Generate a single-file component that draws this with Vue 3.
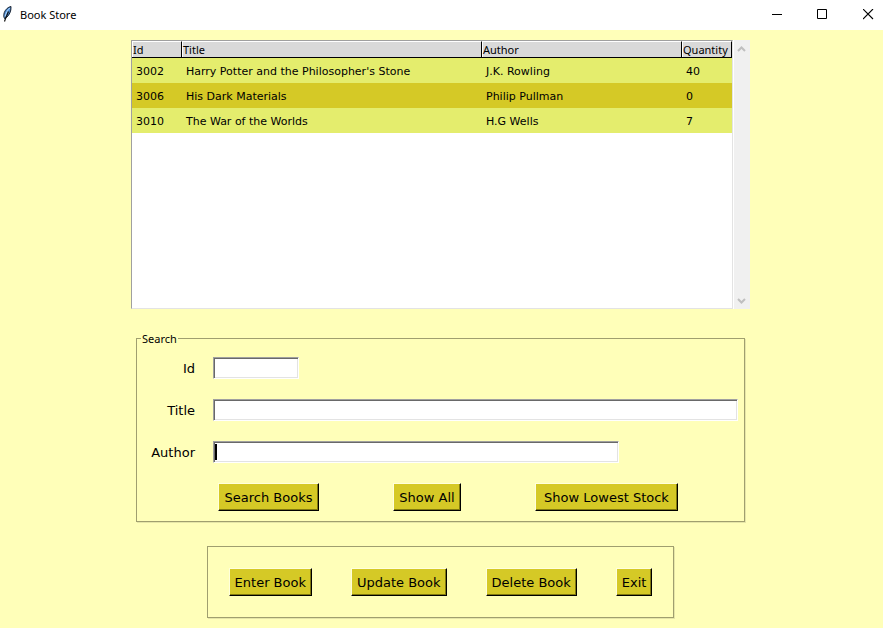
<script setup>
import { ref } from 'vue'

const books = ref([
  { id: '3002', title: "Harry Potter and the Philosopher's Stone", author: 'J.K. Rowling', quantity: 40 },
  { id: '3006', title: 'His Dark Materials', author: 'Philip Pullman', quantity: 0 },
  { id: '3010', title: 'The War of the Worlds', author: 'H.G Wells', quantity: 7 },
])

const id = ref('')
const title = ref('')
const author = ref('')
</script>

<template>
  <div class="window">
    <header class="titlebar">
      <svg class="feather" width="12" height="18" viewBox="0 0 12 18" aria-hidden="true">
        <path d="M10 1.500 C7 2 4.500 4.500 3.300 7.500 C2.500 10 2.700 12 3.500 13.500 C6.500 12.500 9 9 9.800 5 Z" fill="#4f8fd6" stroke="#17202e" stroke-width="1" />
        <path d="M8.800 3 C6.500 5 5 8 4 11.500" fill="none" stroke="#b5d8fa" stroke-width="1" />
        <path d="M7.500 6.500 C6 10 4.500 13 3.500 16.500" fill="none" stroke="#111" stroke-width="1.200" />
      </svg>
      <h1 class="caption">Book Store</h1>
      <div class="controls">
        <button type="button" aria-label="Minimize">
          <svg width="11" height="11" viewBox="0 0 11 11"><path d="M1 5.500H11" stroke="#000" /></svg>
        </button>
        <button type="button" aria-label="Maximize">
          <svg width="11" height="11" viewBox="0 0 11 11"><path d="M.5.5H9.500V9.500H.5Z" fill="none" stroke="#000" /></svg>
        </button>
        <button type="button" aria-label="Close">
          <svg width="11" height="11" viewBox="0 0 11 11"><path d="M0 0L10 10M10 0L0 10" stroke="#000" stroke-width="1.100" /></svg>
        </button>
      </div>
    </header>

    <main class="content">
      <section class="listing">
        <div class="pane">
          <table>
            <colgroup>
              <col class="narrow" />
              <col class="wide" />
              <col class="medium" />
              <col class="narrow" />
            </colgroup>
            <thead>
              <tr>
                <th scope="col">Id</th>
                <th scope="col">Title</th>
                <th scope="col">Author</th>
                <th scope="col">Quantity</th>
              </tr>
            </thead>
            <tbody>
              <tr v-for="book in books" :key="book.id">
                <td>{{ book.id }}</td>
                <td>{{ book.title }}</td>
                <td>{{ book.author }}</td>
                <td>{{ book.quantity }}</td>
              </tr>
            </tbody>
          </table>
        </div>
        <div class="scrollbar">
          <button type="button" aria-label="Scroll up">
            <svg width="9" height="6" viewBox="0 0 9 6"><path d="M1 5L4.500 1.500L8 5" fill="none" stroke="#bfbfbf" stroke-width="2" /></svg>
          </button>
          <button type="button" aria-label="Scroll down">
            <svg width="9" height="6" viewBox="0 0 9 6"><path d="M1 1L4.500 4.500L8 1" fill="none" stroke="#bfbfbf" stroke-width="2" /></svg>
          </button>
        </div>
      </section>

      <form class="search-form" @submit.prevent>
        <fieldset class="search">
          <legend>Search</legend>
          <div class="fields">
            <label for="book-id">Id</label>
            <input id="book-id" v-model="id" class="short" type="text" />
            <label for="book-title">Title</label>
            <input id="book-title" v-model="title" type="text" />
            <label for="book-author">Author</label>
            <input id="book-author" v-model="author" class="long active" type="text" />
          </div>
          <div class="search-actions">
            <button type="submit" class="action">Search Books</button>
            <button type="button" class="action">Show All</button>
            <button type="button" class="action">Show Lowest Stock</button>
          </div>
        </fieldset>
      </form>

      <section class="manage">
        <button type="button" class="action">Enter Book</button>
        <button type="button" class="action">Update Book</button>
        <button type="button" class="action">Delete Book</button>
        <button type="button" class="action">Exit</button>
      </section>
    </main>
  </div>
</template>

<style>
body {
  background: #ffffb9;
}
</style>

<style scoped>
.window {
  min-height: 100vh;
  box-sizing: border-box;
  display: flex;
  flex-direction: column;
  color: #000;
  font-family: "DejaVu Sans", Verdana, sans-serif;
  font-size: 13px;
}
.titlebar {
  display: flex;
  align-items: center;
  height: 30px;
  padding: 0 9px 0 1px;
  background: #fff;
}
.feather {
  margin-bottom: 2px;
}
.caption {
  margin: 0 0 0 7px;
  font: 400 11px/16px "Noto Sans", "Open Sans", sans-serif;
}
.controls {
  display: flex;
  gap: 35px;
  margin: 0 0 1px auto;
}
.controls button,
.scrollbar button {
  display: flex;
  padding: 0;
  border: 0;
  background: none;
}
.content {
  display: flex;
  flex-direction: column;
  align-items: center;
  padding: 10px 2px 10px 0;
}
.listing {
  display: flex;
  width: 619px;
  max-width: 100%;
  height: 269px;
  background: #fff;
}
.pane {
  flex: 1;
  box-sizing: border-box;
  margin-right: 1px;
  border: 1px solid #e3e3e3;
  border-top-color: #a0a0a0;
  border-left-color: #a0a0a0;
}
table {
  width: 100%;
  table-layout: fixed;
  border-collapse: separate;
  border-spacing: 0;
}
.narrow {
  width: 50px;
}
.medium {
  width: 200px;
}
th {
  box-sizing: border-box;
  height: 17px;
  padding: 0 0 0 1px;
  border: 1px solid #000;
  border-top-color: #fff;
  border-left: 0;
  background: #d9d9d9;
  box-shadow: inset 1px 0 0 #fff;
  font: 400 11px/15px "Noto Sans", "Open Sans", sans-serif;
  text-align: left;
  white-space: nowrap;
}
td {
  padding: 2px 4px 0;
  background: #e4ed6d;
  font-size: 11px;
  line-height: 23px;
  white-space: nowrap;
}
tbody tr:nth-child(even) td {
  background: #d5c926;
}
.scrollbar {
  display: flex;
  flex-direction: column;
  align-items: center;
  justify-content: space-between;
  width: 16px;
  box-sizing: border-box;
  padding: 6px 1px 5px 0;
  background: #f0f0f0;
}
.search-form {
  width: 609px;
  max-width: 100%;
  margin-top: 22px;
}
.search {
  margin: 0;
  min-width: 0;
  padding: 11px 6px 10px;
  border: 1px solid #a09f6f;
  box-shadow: 1px 1px 0 #e6e6a7;
}
legend {
  margin-left: -2px;
  padding: 0 1px;
  font: 400 11px/15px "Noto Sans", "Open Sans", sans-serif;
}
.fields {
  display: grid;
  grid-template-columns: 52px 1fr;
  gap: 20px 18px;
  align-items: center;
}
label {
  text-align: right;
}
input {
  width: 100%;
  height: 22px;
  box-sizing: border-box;
  padding: 0 2px;
  border: 1px solid #fff;
  border-top-color: #a0a0a0;
  border-left-color: #a0a0a0;
  border-radius: 0;
  outline: 0;
  background: #fff;
  box-shadow: inset 1px 1px 0 #696969, inset -1px -1px 0 #e3e3e3;
  font: inherit;
}
.short {
  width: 86px;
}
.long {
  width: 406px;
}
.active {
  background: #fff linear-gradient(#000, #000) 1px center / 2px 16px no-repeat;
}
.search-actions {
  display: grid;
  grid-template-columns: 101px 68px 143px;
  gap: 74px;
  margin: 20px 0 0 75px;
}
.action {
  height: 28px;
  box-sizing: border-box;
  padding: 0 5px;
  border: 1px solid #000;
  border-top-color: #ffffdc;
  border-left-color: #ffffdc;
  border-radius: 0;
  background: #d5c926;
  box-shadow: inset -1px -1px 0 #80790f;
  color: #000;
  font: inherit;
  white-space: nowrap;
}
.manage {
  display: flex;
  flex-wrap: wrap;
  gap: 39px;
  margin-top: 24px;
  padding: 21px;
  border: 1px solid #a09f6f;
  box-shadow: 1px 1px 0 #e6e6a7;
}
</style>
